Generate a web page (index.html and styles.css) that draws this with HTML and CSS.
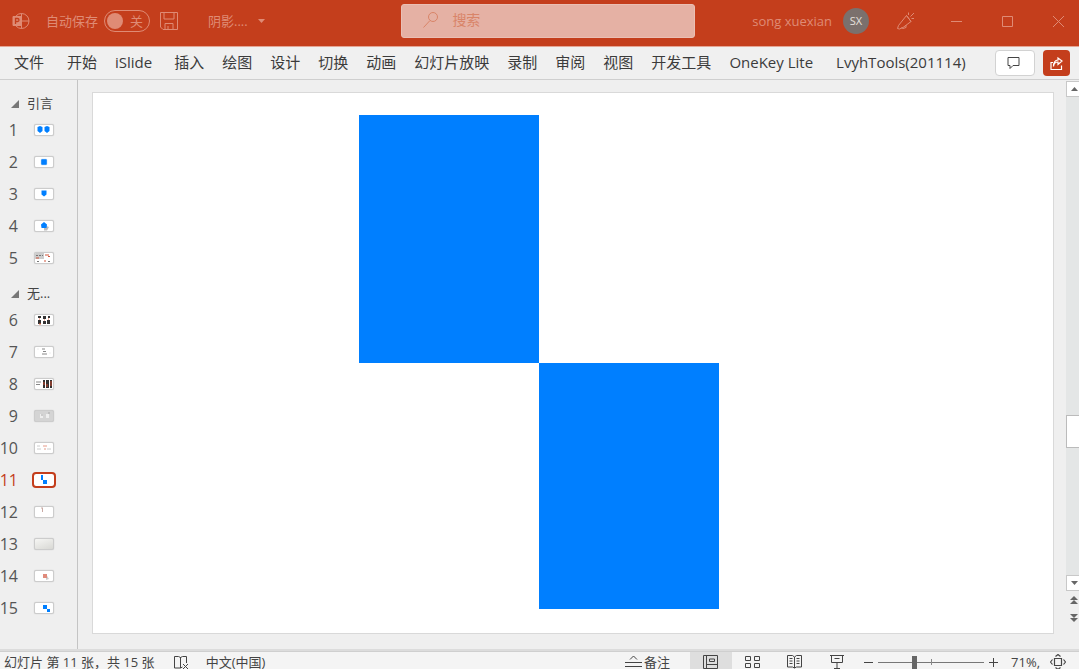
FILE: index.html
```html
<!DOCTYPE html>
<html lang="zh-CN">
<head>
    <meta charset="UTF-8">
    <meta name="viewport" content="width=device-width, initial-scale=1.0">
    <title>PowerPoint</title>
    <link rel="stylesheet" href="styles.css">
</head>
<body>
<div class="app">
    <!-- 标题栏 -->
    <header class="titlebar">
        <div class="title-left">
            <svg class="logo" width="18" height="18" viewBox="0 0 18 18" fill="none" stroke="currentColor">
                <circle cx="9.500" cy="9" r="7.500"/>
                <path d="M9.500 1.500v15M9.500 9H17"/>
                <path d="M1 4.500h8v9H1z" fill="currentColor"/>
                <path d="M3.500 12V6.500h2a1.500 1.500 0 0 1 0 3h-2" stroke="#c43e1c" stroke-width="1.300"/>
            </svg>
            <label class="autosave">自动保存
                <span class="switch"><input type="checkbox" class="switch-input"><span class="knob"></span>关</span>
            </label>
            <button class="icon-btn save" type="button" aria-label="保存">
                <svg width="18" height="18" viewBox="0 0 18 18" fill="none" stroke="currentColor">
                    <path d="M.5.500h17v17H3l-2.500-2.500zM4 .500V7h10V.500M5 17.500v-6h8v6M8 17.500V14"/>
                </svg>
            </button>
            <button class="icon-btn doc-name" type="button">阴影....
                <svg width="8" height="5" viewBox="0 0 8 5"><path d="M0 0h7L3.500 4z" fill="currentColor"/></svg>
            </button>
        </div>
        <label class="search">
            <svg width="16" height="18" viewBox="0 0 16 18" fill="none" stroke="currentColor">
                <circle cx="10" cy="6" r="4.500"/><path d="M7 9.500.500 16.500"/>
            </svg>
            <input type="text" class="search-input" placeholder="搜索" aria-label="搜索">
        </label>
        <div class="title-right">
            <span class="user">song xuexian</span>
            <span class="avatar">SX</span>
            <button class="icon-btn pen" type="button" aria-label="即将推出的功能">
                <svg width="18" height="18" viewBox="0 0 18 18" fill="none" stroke="currentColor">
                    <path d="M9.500 3.500 1.500 13.500.500 16.500l2 .5 3.500-1.500 8-6zM9.500 3.500l4.500 6M4.500 15.500l1.500 1 3-1V13M11.500 3V.500M13.500 4.500 17 1M14.500 6.500H17"/>
                </svg>
            </button>
            <div class="window-btns">
                <button class="icon-btn" type="button" aria-label="最小化">
                    <svg width="11" height="11" viewBox="0 0 11 11" stroke="currentColor"><path d="M0 5.500h11"/></svg>
                </button>
                <button class="icon-btn" type="button" aria-label="最大化">
                    <svg width="11" height="11" viewBox="0 0 11 11" fill="none" stroke="currentColor"><path d="M.5.500h10v10H.500z"/></svg>
                </button>
                <button class="icon-btn" type="button" aria-label="关闭">
                    <svg width="11" height="11" viewBox="0 0 11 11" stroke="currentColor"><path d="m0 0 11 11M11 0 0 11"/></svg>
                </button>
            </div>
        </div>
    </header>

    <!-- 功能区选项卡 -->
    <nav class="ribbon">
        <a class="tab tab-file" href="#">文件</a>
        <a class="tab" href="#">开始</a>
        <a class="tab tab-addin" href="#">iSlide</a>
        <a class="tab" href="#">插入</a>
        <a class="tab" href="#">绘图</a>
        <a class="tab" href="#">设计</a>
        <a class="tab" href="#">切换</a>
        <a class="tab" href="#">动画</a>
        <a class="tab" href="#">幻灯片放映</a>
        <a class="tab" href="#">录制</a>
        <a class="tab" href="#">审阅</a>
        <a class="tab" href="#">视图</a>
        <a class="tab" href="#">开发工具</a>
        <a class="tab tab-file" href="#">OneKey Lite</a>
        <a class="tab" href="#">LvyhTools(201114)</a>
        <div class="ribbon-actions">
            <button class="comment-btn" type="button" aria-label="批注">
                <svg width="13" height="12" viewBox="0 0 13 12" fill="none" stroke="currentColor"><path d="M1 .500h11v8H6l-3 3v-3H1z"/></svg>
            </button>
            <button class="share-btn" type="button" aria-label="共享">
                <svg width="13" height="13" viewBox="0 0 13 13" fill="none" stroke="currentColor" stroke-width="1.200">
                    <path d="M3 5.500H1v7h10.500V8.500M3.500 9.500c.3-3.200 2-4.500 4.500-4.500V7.500l4-3.500-4-3v2C5 3.200 3.500 5.500 3.500 9.500z"/>
                </svg>
            </button>
        </div>
    </nav>

    <main class="workspace">
        <!-- 缩略图 -->
        <aside class="slides">
            <h2 class="section">引言</h2>
            <ol class="slide-list">
                <li class="slide-item"><span class="num">1</span>
                    <svg class="thumb" viewBox="0 0 18 10"><path d="m5 1 2.500 1v4L5 8 2.500 6V2zM12 1l2.500 1v4L12 8 9.500 6V2z" fill="#007fff"/></svg></li>
                <li class="slide-item"><span class="num">2</span>
                    <svg class="thumb" viewBox="0 0 18 10"><rect x="6" y="2" width="6" height="6" rx="1" fill="#007fff" stroke="#b9d4ee" stroke-width=".5"/></svg></li>
                <li class="slide-item"><span class="num">3</span>
                    <svg class="thumb" viewBox="0 0 18 10"><path d="M6.500 1.500h5v4L9 7.500l-2.500-2z" fill="#007fff"/></svg></li>
                <li class="slide-item"><span class="num">4</span>
                    <svg class="thumb" viewBox="0 0 18 10"><path d="m9 4 5 2-2 3.500H9z" fill="#bbb"/><path d="m9 1 3 2.500-.500 3.500H6.500L6 3.500z" fill="#007fff"/></svg></li>
                <li class="slide-item"><span class="num">5</span>
                    <svg class="thumb" viewBox="0 0 18 10"><path d="M0 0h9v6H0z" fill="#ccc"/><path d="M1 2.500h7M2 8.500h3M13 8.500h3" stroke="#777" stroke-dasharray="2 1"/><path d="M10 2h4M13 3.500h2M9 8h2M1 5h3" stroke="#d0543a"/></svg></li>
            </ol>
            <h2 class="section">无...</h2>
            <ol class="slide-list">
                <li class="slide-item"><span class="num">6</span>
                    <svg class="thumb" viewBox="0 0 18 10"><path d="M3 1h3v2H3zM8 1h3v3H8zM13 1h2v2h-2zM3 5h3v4H3zM8 6h3v3H8zM12 5h3v4h-3z" fill="#333"/><path d="M4 4h1M9 5h1M13 4h1M4 9h2" stroke="#e0603d"/></svg></li>
                <li class="slide-item"><span class="num">7</span>
                    <svg class="thumb" viewBox="0 0 18 10"><path d="M7 2h3M8 4.500h3M7 7h5" stroke="#888"/><path d="M2 2h2M14 6h2" stroke="#eee"/></svg></li>
                <li class="slide-item"><span class="num">8</span>
                    <svg class="thumb" viewBox="0 0 18 10"><path d="M1 3h5M1 5.500h4" stroke="#888"/><path d="M8 1h2v8H8zM11 1h3v8h-3zM15 1h2v8h-2z" fill="#333"/><path d="M9 3v3M12 5v3M16 2v5" stroke="#d0492d"/></svg></li>
                <li class="slide-item"><span class="num">9</span>
                    <svg class="thumb thumb-gray" viewBox="0 0 18 10"><path d="M5 3h3v4H5zM11 3h3v4h-3z" fill="#eee"/><path d="M6 4h2M13 2h2" stroke="#aaa"/></svg></li>
                <li class="slide-item"><span class="num">10</span>
                    <svg class="thumb" viewBox="0 0 18 10"><path d="M2 3h3M2 6h4M12 6h4" stroke="#ccc"/><path d="M8 3h4M9 6h2" stroke="#e59a88"/></svg></li>
                <li class="slide-item active"><span class="num">11</span>
                    <svg class="thumb" viewBox="0 0 18 10"><path d="M6 0h2v5H6zM8 5h4v4H8z" fill="#007fff"/></svg></li>
                <li class="slide-item"><span class="num">12</span>
                    <svg class="thumb" viewBox="0 0 18 10"><path d="M6 1h2M7.500 1v4" stroke="#c9aaa4"/></svg></li>
                <li class="slide-item"><span class="num">13</span>
                    <svg class="thumb thumb-shade" viewBox="0 0 18 10"></svg></li>
                <li class="slide-item"><span class="num">14</span>
                    <svg class="thumb" viewBox="0 0 18 10"><path d="m11 3 3 5-3 1z" fill="#ccc"/><path d="M8 3h4v4H8z" fill="#e08b7c"/></svg></li>
                <li class="slide-item"><span class="num">15</span>
                    <svg class="thumb" viewBox="0 0 18 10"><path d="M8 2h4v4H8zM12 6h3v3h-3z" fill="#007fff"/></svg></li>
            </ol>
        </aside>

        <section class="stage">
            <div class="slide">
                <svg class="canvas" viewBox="0 0 960 541" preserveAspectRatio="none" shape-rendering="crispEdges">
                    <rect x="266" y="22" width="180" height="248"/>
                    <rect x="446" y="270" width="180" height="247"/>
                </svg>
            </div>
        </section>

        <div class="scrollbar">
            <button class="scroll-btn" type="button" aria-label="向上滚动"><svg width="7" height="4"><path d="m0 4 3.500-4L7 4z"/></svg></button>
            <div class="track">
                <div class="scroll-thumb"></div>
            </div>
            <button class="scroll-btn" type="button" aria-label="向下滚动"><svg width="7" height="4"><path d="m0 0 3.500 4L7 0z"/></svg></button>
            <button class="page-btn" type="button" aria-label="上一张幻灯片"><svg width="8" height="8"><path d="m0 4 4-4 4 4zM0 8l4-4 4 4z"/></svg></button>
            <button class="page-btn" type="button" aria-label="下一张幻灯片"><svg width="8" height="8"><path d="m0 0 4 4 4-4zM0 4l4 4 4-4z"/></svg></button>
        </div>
    </main>

    <!-- 状态栏 -->
    <footer class="statusbar">
        <span class="page-info">幻灯片 第 11 张，共 15 张</span>
        <button class="status-btn" type="button" aria-label="拼写检查">
            <svg width="16" height="15" viewBox="0 0 16 15" fill="none" stroke="currentColor"><path d="M7.500 2v11H1.500V1.500h4l2 1 2-1h4V8M7.500 13l2-1M10 9l5 5M15 9l-5 5"/></svg>
        </button>
        <span class="language">中文(中国)</span>
        <div class="status-right">
            <button class="status-btn notes" type="button">
                <svg width="17" height="14" viewBox="0 0 17 14" fill="none" stroke="currentColor"><path d="M5 4.500 8.500 1 12 4.500M0 7.500h17M0 11.500h17"/></svg>备注
            </button>
            <button class="status-btn view selected" type="button" aria-label="普通视图">
                <svg width="16" height="14" viewBox="0 0 16 14" fill="none" stroke="currentColor"><path d="M.5.500h14v13H.500zM3.500.500v13M3.500 9.500h11M6.500 4h5v2.500h-5z"/></svg>
            </button>
            <button class="status-btn view" type="button" aria-label="幻灯片浏览">
                <svg width="16" height="14" viewBox="0 0 16 14" fill="none" stroke="currentColor"><path d="M.5 1.500h5v4h-5zM9.500 1.500h5v4h-5zM.5 8.500h5v4h-5zM9.500 8.500h5v4h-5z"/></svg>
            </button>
            <button class="status-btn view" type="button" aria-label="阅读视图">
                <svg width="16" height="14" viewBox="0 0 16 14" fill="none" stroke="currentColor"><path d="M7.500 2v11l-2-1h-5V.500h5zl2-1.500h5V12h-5l-2 1M2.500 3.500h3M2.500 6h3M2.500 8.500h3M9.500 3.500h3M9.500 6h3M9.500 8.500h3"/></svg>
            </button>
            <button class="status-btn view" type="button" aria-label="幻灯片放映">
                <svg width="16" height="14" viewBox="0 0 16 14" fill="none" stroke="currentColor"><path d="M1 .500h14M2.500.500v7h11v-7M5.500 3.500h5M8 7.500v6M5 13.500h6"/></svg>
            </button>
            <div class="zoom">
                <button class="status-btn" type="button" aria-label="缩小"><svg width="9" height="9" stroke="currentColor"><path d="M0 4.500h9"/></svg></button>
                <input type="range" class="zoom-range" min="0" max="100" value="34" aria-label="缩放">
                <button class="status-btn" type="button" aria-label="放大"><svg width="9" height="9" stroke="currentColor"><path d="M0 4.500h9M4.500 0v9"/></svg></button>
            </div>
            <span class="zoom-value">71%,</span>
            <button class="status-btn" type="button" aria-label="适应窗口">
                <svg width="16" height="16" viewBox="0 0 16 16" fill="none" stroke="currentColor" stroke-width="1.200"><path d="M4.500 4.500h7v7h-7zM5.500 2.500 8 .500l2.500 2M5.500 13.500l2.500 2 2.500-2M2.500 5.500.500 8l2 2.500M13.500 5.500l2 2.500-2 2.500"/></svg>
            </button>
        </div>
    </footer>
</div>
</body>
</html>
```
FILE: styles.css
```css
* {
    box-sizing: border-box;
}

body {
    margin: 0;
    height: 100vh;
    overflow: hidden;
    font-family: "Open Sans", "Noto Sans CJK SC", sans-serif;
    font-size: 13px;
    color: #444;
}

button, input {
    font: inherit;
    color: inherit;
    margin: 0;
}

button {
    display: flex;
    align-items: center;
    justify-content: center;
    padding: 0;
    border: none;
    background: none;
}

svg {
    display: block;
    flex: none;
}

/* 状态栏底部略超出窗口 */
.app {
    display: flex;
    flex-direction: column;
    height: calc(100vh + 3px);
}

/* 标题栏 */
.titlebar {
    display: grid;
    grid-template-columns: 37.2% 27.2% 1fr;
    align-items: center;
    height: 47px;
    padding-bottom: 4px;
    background-color: #c43e1c;
    border-bottom: 1px solid #e5a594;
    color: #df8b75;
    line-height: 16px;
    flex: none;
}

.title-left {
    display: flex;
    align-items: center;
    padding-left: 12px;
}

.autosave {
    display: flex;
    align-items: center;
    gap: 6px;
    margin-left: 16px;
}

.switch {
    display: flex;
    align-items: center;
    gap: 7px;
    width: 46px;
    height: 22px;
    padding-left: 2px;
    border: 1px solid #df8b75;
    border-radius: 11px;
}

.switch-input {
    position: absolute;
    opacity: 0;
}

.knob {
    width: 16px;
    height: 16px;
    border-radius: 50%;
    background-color: #df8b75;
}

.save {
    margin-left: 10px;
}

.doc-name {
    gap: 10px;
    margin-left: 30px;
}

.search {
    display: flex;
    align-items: center;
    gap: 13px;
    height: 34px;
    padding: 0 0 2px 21px;
    border: 1px solid #eabfb4;
    border-radius: 3px;
    background-color: #e5b1a4;
    color: #d98468;
    font-size: 14px;
}

.search-input {
    flex: 1;
    min-width: 0;
    padding: 0;
    border: none;
    outline: none;
    background: none;
}

.search-input::placeholder {
    color: inherit;
    opacity: 1;
}

.title-right {
    display: flex;
    align-items: center;
    justify-content: flex-end;
    padding-right: 15px;
}

.avatar {
    display: flex;
    align-items: center;
    justify-content: center;
    width: 26px;
    height: 26px;
    margin: 0 28px 0 11px;
    border-radius: 50%;
    background-color: #7b706d;
    color: #e6e0de;
    font-size: 11px;
}

.window-btns {
    display: flex;
    gap: 40px;
    margin-left: 36px;
}

/* 选项卡 */
.ribbon {
    display: flex;
    align-items: center;
    gap: 18px;
    height: 33px;
    padding: 0 9px 0 14px;
    background-color: #f0f0f0;
    border-bottom: 1px solid #cfcfcf;
    flex: none;
}

.tab {
    padding-bottom: 2px;
    color: #3b3b3b;
    font-size: 15px;
    line-height: 20px;
    text-decoration: none;
    white-space: nowrap;
}

.tab-file {
    margin-right: 5px;
}

.tab-addin {
    margin-right: 4px;
}

.ribbon-actions {
    display: flex;
    gap: 8px;
    margin-left: auto;
}

.comment-btn {
    width: 40px;
    height: 26px;
    padding-right: 4px;
    border: 1px solid #d2d2d2;
    border-radius: 4px;
    background-color: #fff;
}

.share-btn {
    width: 27px;
    height: 26px;
    border-radius: 4px;
    background-color: #c43e1c;
    color: #fff;
}

/* 工作区 */
.workspace {
    display: flex;
    flex: 1;
    min-height: 0;
    background-color: #efefef;
    border-bottom: 2px solid #dcdcdc;
}

.slides {
    width: 78px;
    padding-top: 4px;
    border-right: 1px solid #c4c4c4;
    overflow: hidden;
    flex: none;
}

.section {
    display: flex;
    align-items: center;
    gap: 8px;
    height: 20px;
    margin: 10px 0 0;
    padding: 0 0 4px 11px;
    font-size: 13px;
    font-weight: normal;
}

.section::before {
    content: "";
    margin-top: 4px;
    border-left: 8px solid transparent;
    border-bottom: 8px solid #777;
}

.slide-list {
    margin: 0;
    padding: 0;
    list-style: none;
}

.slide-item {
    display: flex;
    align-items: center;
    gap: 16px;
    height: 32px;
}

.num {
    display: flex;
    justify-content: flex-end;
    width: 18px;
    padding-bottom: 1px;
    color: #555;
    font-size: 16px;
}

.thumb {
    width: 20px;
    height: 12px;
    border: 1px solid #ccc;
    border-radius: 2px;
    background-color: #fff;
    box-shadow: 0 0 1px #bbb;
}

.thumb-gray {
    background-color: #d4d4d4;
}

.thumb-shade {
    background-image: linear-gradient(160deg, #f6f6f4, #d8d8d4);
}

.active .num {
    color: #c43e1c;
}

.active .thumb {
    border-color: #fff;
    outline: 2px solid #c43e1c;
}

.stage {
    display: flex;
    flex: 1;
    min-width: 0;
    padding: 12px 12px 15px 14px;
}

.slide {
    flex: 1;
    border: 1px solid #d9d9d9;
    background-color: #fff;
}

.canvas {
    width: 100%;
    height: 100%;
    fill: #007fff;
}

/* 滚动条 */
.scrollbar {
    display: flex;
    flex-direction: column;
    width: 13px;
    padding: 1px 0 22px;
    fill: #666;
    flex: none;
}

.scroll-btn {
    height: 16px;
    padding-left: 2px;
    border: 1px solid #c8c8c8;
    border-right: none;
    background-color: #fff;
}

.track {
    display: flex;
    flex-direction: column;
    flex: 1;
    background-color: #e4e6e6;
}

.track::before {
    content: "";
    flex: 5;
}

.track::after {
    content: "";
    flex: 2;
}

.scroll-thumb {
    height: 33px;
    border: 1px solid #bbb;
    border-right: none;
    background-color: #fff;
}

.page-btn {
    height: 18px;
    padding-left: 3px;
}

/* 状态栏 */
.statusbar {
    display: flex;
    align-items: center;
    height: 21px;
    padding: 0 13px 0 4px;
    border-top: 1px solid #cfcfcf;
    background-color: #f4f4f4;
    line-height: 14px;
    white-space: nowrap;
    flex: none;
}

.language {
    margin-left: 17px;
}

.page-info {
    margin-right: 18px;
}

.status-right {
    display: flex;
    align-items: center;
    align-self: stretch;
    margin-left: auto;
}

.notes {
    gap: 2px;
    margin-right: 20px;
}

.view {
    align-self: stretch;
    width: 42px;
}

.selected {
    background-color: #dedede;
}

.zoom {
    display: flex;
    align-items: center;
    gap: 5px;
    margin: 0 13px 0 6px;
}

.zoom-range {
    appearance: none;
    width: 106px;
    height: 16px;
    background: linear-gradient(#888, #888) center / 1px 6px no-repeat,
        linear-gradient(#777, #777) center / 100% 1px no-repeat;
}

.zoom-range::-webkit-slider-thumb {
    appearance: none;
    width: 5px;
    height: 13px;
    background-color: #666;
}

.zoom-value {
    margin-right: 10px;
}
```
